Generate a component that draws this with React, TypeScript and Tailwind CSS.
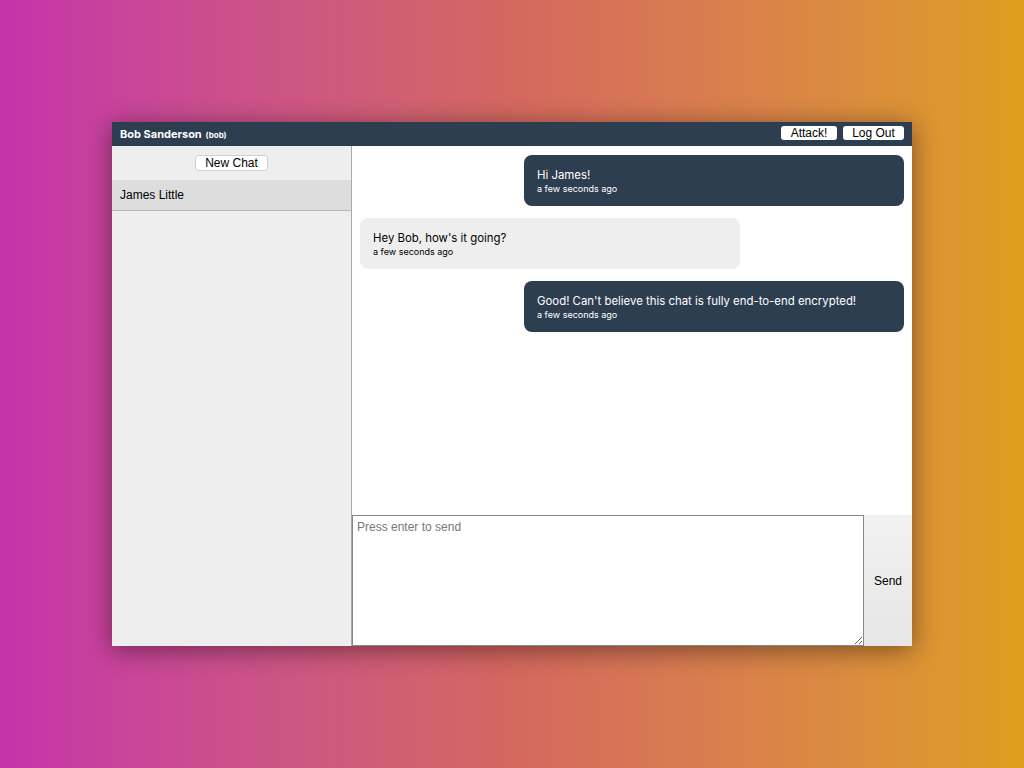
import React from "react"

type Message = {
    text: string
    mine: boolean
}

const messages: Message[] = [
    { text: "Hi James!", mine: true },
    { text: "Hey Bob, how's it going?", mine: false },
    { text: "Good! Can't believe this chat is fully end-to-end encrypted!", mine: true },
]

const Bubble: React.FC<Message> = ({ text, mine }) => {
    return (
        <div className={`flex ${mine ? "justify-end" : "justify-start"}`}>
            <div
                className={`w-[380px] rounded-lg px-[13px] pt-[13px] pb-[11px] ${
                    mine ? "bg-[#2e3e51] text-white" : "bg-[#eeeeee] text-black"
                }`}
            >
                <div className="text-[11.4px] leading-[14px]">{text}</div>
                <div className="text-[9px] leading-[13px]">a few seconds ago</div>
            </div>
        </div>
    )
}

export default function App() {
    return (
        <div className="min-h-screen w-full bg-gradient-to-r from-[#c532aa] via-[#d4685e] to-[#de9e1c] pt-[122px] font-['Liberation_Sans',Arial,sans-serif]">
            <div className="mx-auto flex h-[524px] w-[800px] flex-col bg-white shadow-[0_4px_24px_rgba(0,0,0,0.45)]">
                <header className="flex h-[24px] items-center justify-between bg-[#2c3e50] px-2">
                    <div className="pb-[5px] font-['Inter',sans-serif] font-bold leading-none text-white">
                        <span className="text-[11px]">Bob Sanderson</span>{" "}
                        <span className="text-[8px]">(bob)</span>
                    </div>
                    <div className="flex gap-[6px] pb-[2px]">
                        <button className="h-[14px] w-[56px] rounded-[3px] bg-white text-[12px] leading-[14px] text-black">
                            Attack!
                        </button>
                        <button className="h-[14px] w-[61px] rounded-[3px] bg-white text-[12px] leading-[14px] text-black">
                            Log Out
                        </button>
                    </div>
                </header>

                <div className="flex min-h-0 flex-1">
                    <aside className="flex w-[240px] flex-col border-r border-[#aaaaaa] bg-[#eeeeee]">
                        <div className="flex h-[34px] items-center justify-center">
                            <button className="h-[16px] w-[73px] rounded-[3px] border border-[#d0d0d0] bg-white text-[12px] leading-[14px] text-black">
                                New Chat
                            </button>
                        </div>
                        <div className="flex h-[31px] items-center border-b border-[#b8b8b8] bg-[#dddddd] px-2 text-[12px] text-black">
                            James Little
                        </div>
                    </aside>

                    <main className="flex min-w-0 flex-1 flex-col">
                        <div className="flex flex-1 flex-col gap-[12px] px-[8px] pt-[9px] font-['Inter',sans-serif]">
                            {messages.map((m, i) => (
                                <Bubble key={i} {...m} />
                            ))}
                        </div>
                        <div className="flex h-[131px]">
                            <textarea
                                placeholder="Press enter to send"
                                className="flex-1 resize-y border border-[#888888] px-[4px] py-[2px] text-[12px] outline-none placeholder:text-[#777777]"
                            />
                            <button className="w-[48px] bg-gradient-to-b from-[#f2f2f2] to-[#e6e6e6] text-[12px] text-black">
                                Send
                            </button>
                        </div>
                    </main>
                </div>
            </div>
        </div>
    )
}
